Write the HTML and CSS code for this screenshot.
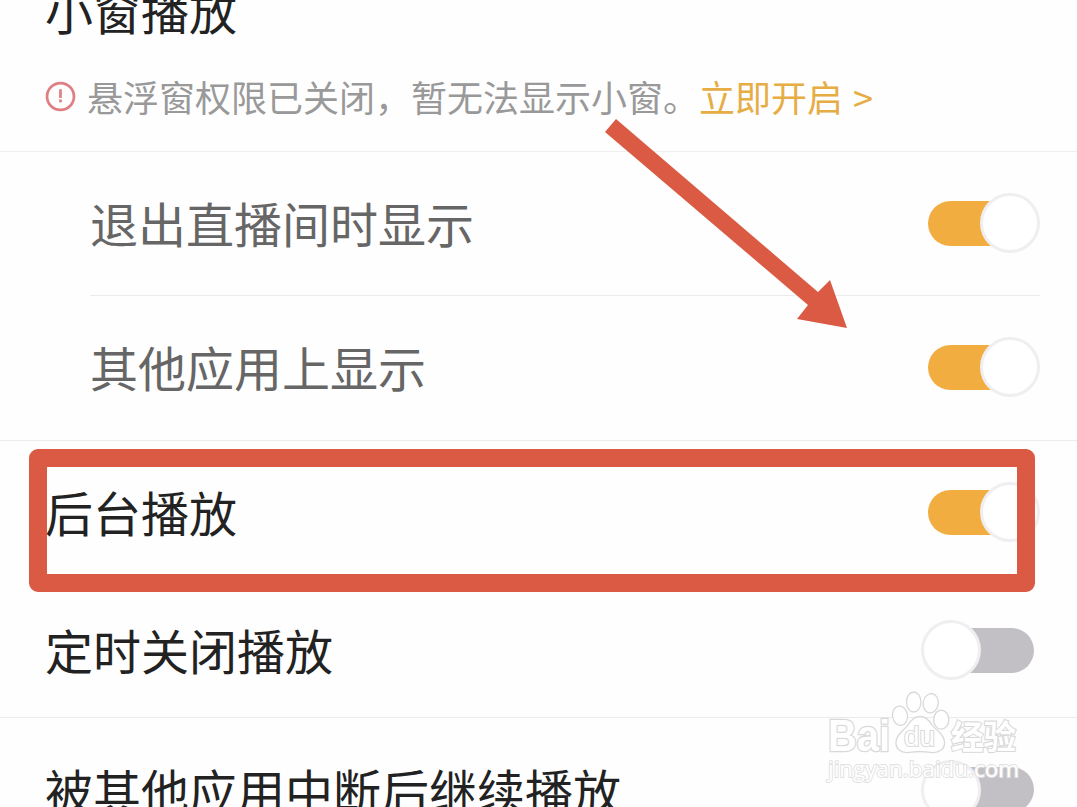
FILE: index.html
```
<!DOCTYPE html>
<html lang="zh-CN">

<head>
  <meta charset="UTF-8">
  <meta name="viewport" content="width=device-width, initial-scale=1.0">
  <title>播放设置</title>
  <link rel="stylesheet" href="styles.css">
</head>

<body>
  <div class="page">
    <!-- 小窗播放 -->
    <div class="section-head">
      <h2>小窗播放</h2>
      <div class="notice">
        <svg class="warn-icon" viewBox="0 0 32 32">
          <circle cx="16" cy="16" r="13.9" />
          <path d="M16 8.500V17.500" />
          <path d="M16 19V22" />
        </svg>
        <span class="notice-text">悬浮窗权限已关闭，暂无法显示小窗。</span>
        <a class="notice-link" href="#">立即开启 &gt;</a>
      </div>
    </div>

    <!-- 设置列表 -->
    <div class="row sub">
      <span>退出直播间时显示</span>
      <div class="switch on"></div>
    </div>
    <div class="row sub last">
      <span>其他应用上显示</span>
      <div class="switch on"></div>
    </div>
    <div class="row main">
      <span>后台播放</span>
      <div class="switch on"></div>
    </div>
    <div class="row timer">
      <span>定时关闭播放</span>
      <div class="switch"></div>
    </div>
    <div class="row resume">
      <span>被其他应用中断后继续播放</span>
      <div class="switch"></div>
    </div>

    <!-- 标注：红框和箭头 -->
    <div class="mark-box"></div>
    <svg class="mark-arrow" viewBox="0 0 250 220">
      <path d="M16 0L218 173L230 161L247 209L197 200L208 186L5 13Z" />
    </svg>

    <!-- 水印 -->
    <svg class="watermark" viewBox="0 0 210 110">
      <text class="bai" x="8" y="66" textLength="62" lengthAdjust="spacingAndGlyphs">Bai</text>
      <ellipse cx="80" cy="30.700" rx="7.500" ry="9.700" transform="rotate(-8 80 30.700)" />
      <ellipse cx="93.700" cy="17" rx="7.200" ry="10" />
      <ellipse cx="110.700" cy="18.300" rx="7.500" ry="9.700" transform="rotate(10 110.700 18.300)" />
      <ellipse cx="121.200" cy="34.700" rx="7.600" ry="9.500" />
      <path d="M100 31.500C106 31.500 109 35 112 40C115 45 124 48 124.500 57C125 64 119 68 112 67.500C107 67 104 66.500 100 66.500C96 66.500 93 67 88 67.500C81 68 75.500 64 76 57C76.500 48 85 45 88 40C91 35 94 31.500 100 31.500Z" />
      <text class="du" x="84" y="61" textLength="31" lengthAdjust="spacingAndGlyphs">du</text>
      <text class="jy" x="131" y="63.500" textLength="65" lengthAdjust="spacingAndGlyphs">经验</text>
      <text class="url" x="8" y="92" textLength="191" lengthAdjust="spacingAndGlyphs">jingyan.baidu.com</text>
    </svg>
  </div>
</body>

</html>
```
FILE: styles.css
```
*,
*::before {
  margin: 0;
  padding: 0;
  box-sizing: border-box;
}

body {
  font-family: "Noto Sans CJK SC", sans-serif;
  background-color: #fefefe;
  color: #222;
}

.page {
  position: relative;
  height: 807px;
  overflow: hidden;
}

/* 顶部标题和提示 */
.section-head {
  height: 152px;
  padding-left: 45px;
  border-bottom: 1px solid #efefef;
  overflow: hidden;
}

.section-head h2 {
  margin-top: -15px;
  font-size: 48px;
  font-weight: 400;
  line-height: 48px;
}

.notice {
  display: flex;
  align-items: center;
  margin-top: 46px;
  height: 36px;
  font-size: 36px;
  line-height: 36px;
  white-space: nowrap;
}

.warn-icon {
  width: 31px;
  height: 31px;
  margin-right: 11px;
  margin-bottom: 1px;
  fill: none;
  stroke: #e07f83;
  stroke-width: 2.8;
}

.notice-text,
.notice-link {
  margin-bottom: 2px;
}

.notice-text {
  color: #999;
}

.notice-link {
  color: #e6ad45;
  text-decoration: none;
  word-spacing: 2px;
}

/* 每一行设置 */
.row {
  display: flex;
  align-items: center;
  justify-content: space-between;
  height: 144px;
  padding: 0 37px 2px 45px;
  font-size: 48px;
  line-height: 48px;
  white-space: nowrap;
}

.row span {
  margin-bottom: 2px;
}

.row.sub {
  margin: 0 37px 0 90px;
  padding: 0 0 1px;
  color: #666;
  border-bottom: 1px solid #ebebeb;
}

.row.sub.last {
  height: 145px;
  margin: 0;
  padding: 0 37px 2px 90px;
}

.row.timer {
  height: 133px;
  padding-right: 43px;
  border-bottom: 1px solid #ebebeb;
}

.row.resume {
  height: 145px;
  padding-right: 43px;
}

/* 开关 */
.switch {
  display: flex;
  align-items: center;
  width: 106px;
  height: 45px;
  border-radius: 23px;
  background-color: #c2c0c5;
}

.switch::before {
  content: "";
  flex-shrink: 0;
  width: 60px;
  height: 60px;
  margin-left: -7px;
  border: 3px solid #f0eef0;
  border-radius: 50%;
  background-color: #fff;
}

.switch.on {
  justify-content: flex-end;
  width: 105px;
  margin-right: 7px;
  background-color: #f2ad40;
}

.switch.on::before {
  margin-left: 0;
  margin-right: -7px;
}

/* 标注 */
.mark-box {
  position: absolute;
  left: 29px;
  top: 449px;
  width: 1006px;
  height: 143px;
  border: 18px solid #db5a44;
  border-radius: 9px;
}

.mark-arrow {
  position: absolute;
  left: 600px;
  top: 119px;
  width: 250px;
  height: 220px;
  fill: #db5a44;
}

/* 水印 */
.watermark {
  position: absolute;
  left: 820px;
  top: 685px;
  width: 210px;
  height: 110px;
  fill: #fff;
  stroke: #d9d9d9;
  stroke-width: 1.3;
}

.watermark text {
  font-family: "Liberation Sans", "Noto Sans CJK SC", sans-serif;
}

.watermark .bai {
  font-size: 44px;
  font-weight: 700;
  stroke-width: 2.6;
  paint-order: stroke;
}

.watermark .du {
  font-size: 27px;
  stroke-width: 2;
  paint-order: stroke;
}

.watermark .jy {
  font-size: 33px;
  font-weight: 700;
  stroke-width: 2.2;
  paint-order: stroke;
}

.watermark .url {
  font-family: "Open Sans", sans-serif;
  font-size: 22px;
  stroke: #e0e0e0;
  stroke-width: 1.8;
  paint-order: stroke;
}
```
